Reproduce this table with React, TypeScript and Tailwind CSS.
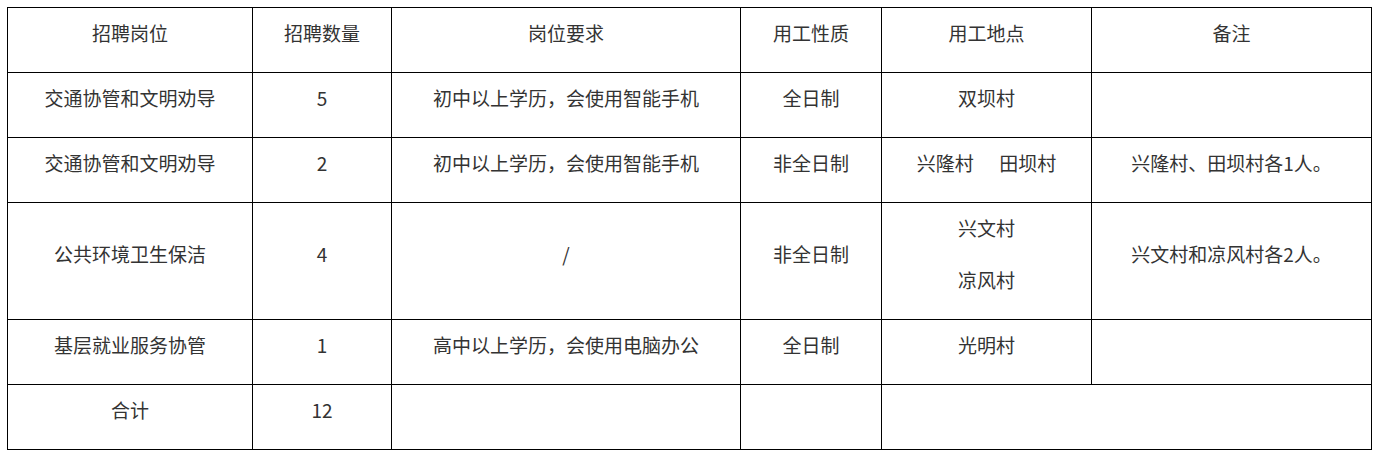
import React from 'react';

type Row = {
  post: string;
  count: string;
  req: string;
  kind: string;
  place: string[];
  note: string;
};

const rows: Row[] = [
  { post: '交通协管和文明劝导', count: '5', req: '初中以上学历，会使用智能手机', kind: '全日制', place: ['双坝村'], note: '' },
  { post: '交通协管和文明劝导', count: '2', req: '初中以上学历，会使用智能手机', kind: '非全日制', place: ['兴隆村\u00a0\u00a0\u00a0\u00a0\u00a0\u00a0田坝村'], note: '兴隆村、田坝村各1人。' },
  { post: '公共环境卫生保洁', count: '4', req: '/', kind: '非全日制', place: ['兴文村', '凉风村'], note: '兴文村和凉风村各2人。' },
  { post: '基层就业服务协管', count: '1', req: '高中以上学历，会使用电脑办公', kind: '全日制', place: ['光明村'], note: '' },
];

const headers = ['招聘岗位', '招聘数量', '岗位要求', '用工性质', '用工地点', '备注'];

const Cell: React.FC<{ lines?: string[]; colSpan?: number; head?: boolean }> = ({ lines = [], colSpan, head }) => {
  const Tag = head ? 'th' : 'td';
  return (
    <Tag colSpan={colSpan} className="border border-black pt-[12px] px-2 align-middle text-center font-normal">
      {lines.length === 0 ? (
        <p className="leading-[26px] mb-[26px]">&nbsp;</p>
      ) : (
        lines.map((l, i) => (
          <p key={i} className="leading-[26px] mb-[26px] whitespace-pre">
            {l}
          </p>
        ))
      )}
    </Tag>
  );
};

export default function App() {
  return (
    <div className="bg-white min-h-screen p-[7px] text-[19px] text-[#333] font-['Microsoft_YaHei','Noto_Sans_CJK_SC',sans-serif]">
      <table className="table-fixed border-collapse w-[1365px]">
        <colgroup>
          <col className="w-[245px]" />
          <col className="w-[139px]" />
          <col className="w-[349px]" />
          <col className="w-[141px]" />
          <col className="w-[210px]" />
          <col className="w-[280px]" />
        </colgroup>
        <thead>
          <tr>
            {headers.map((h) => (
              <Cell key={h} head lines={[h]} />
            ))}
          </tr>
        </thead>
        <tbody>
          {rows.map((r, i) => (
            <tr key={i}>
              <Cell lines={[r.post]} />
              <Cell lines={[r.count]} />
              <Cell lines={[r.req]} />
              <Cell lines={[r.kind]} />
              <Cell lines={r.place} />
              <Cell lines={r.note ? [r.note] : []} />
            </tr>
          ))}
          <tr>
            <Cell lines={['合计']} />
            <Cell lines={['12']} />
            <Cell />
            <Cell />
            <Cell colSpan={2} />
          </tr>
        </tbody>
      </table>
    </div>
  );
}
